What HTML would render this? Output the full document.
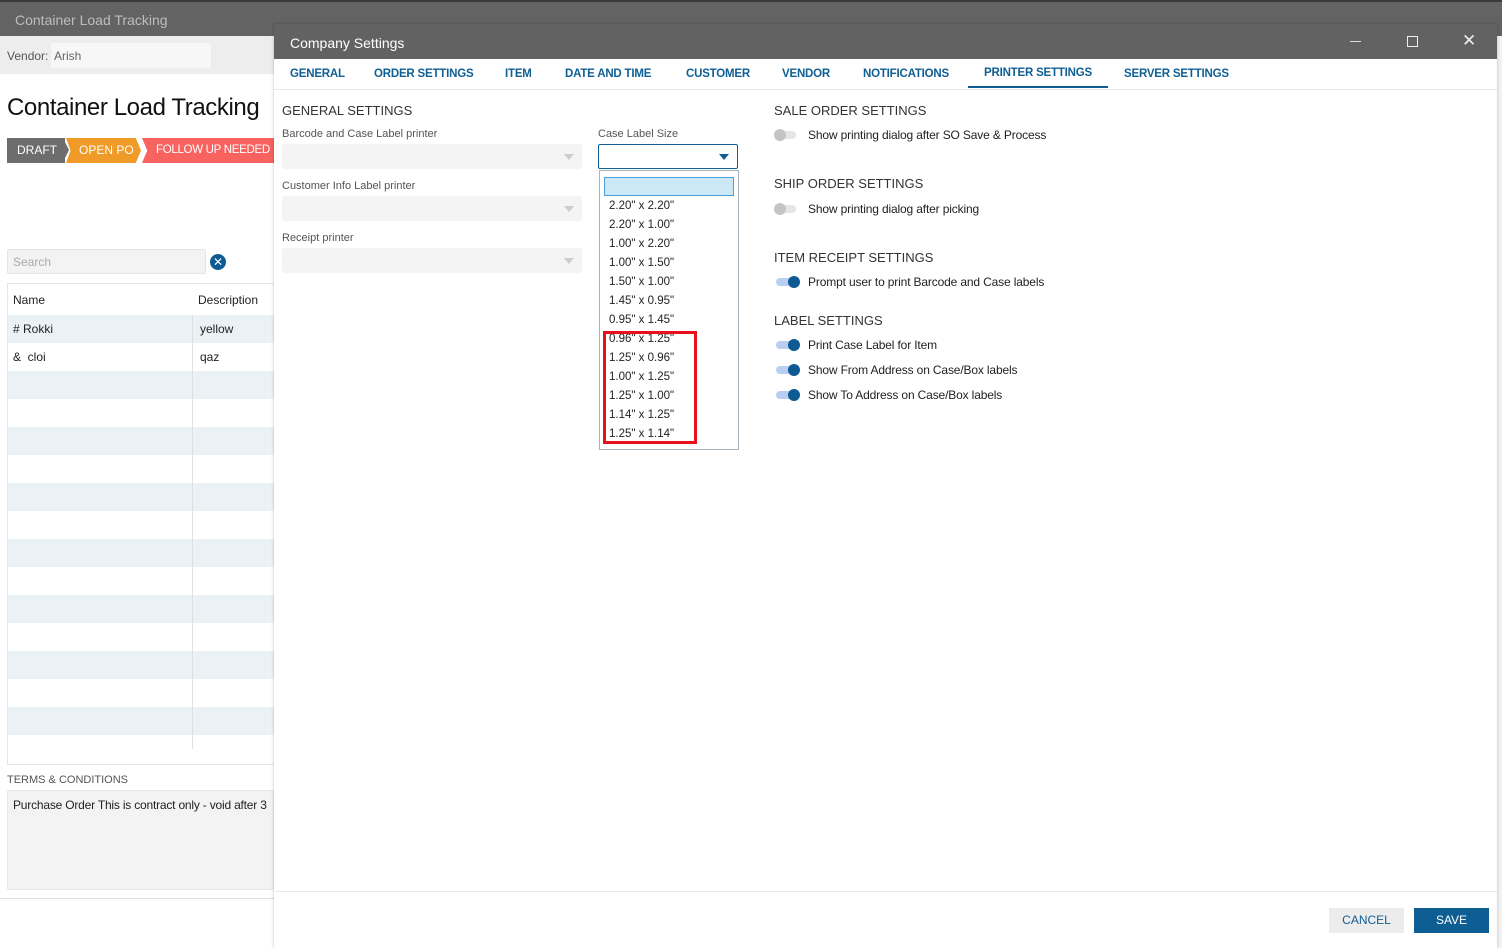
<!DOCTYPE html>
<html><head><meta charset="utf-8"><style>
*{margin:0;padding:0;box-sizing:border-box}
body{width:1502px;height:948px;overflow:hidden;position:relative;background:#fff;font-family:"Liberation Sans","DejaVu Sans",sans-serif;color:#222}
.a{position:absolute;white-space:nowrap}
.tab{position:absolute;top:68px;font-size:11.5px;font-weight:bold;color:#0f5f94;letter-spacing:-0.2px}
.lbl{font-size:11px;color:#555}
.sel{position:absolute;background:#f4f4f4;border-radius:3px;height:25px}
.sel:after{content:"";position:absolute;right:8px;top:10px;border:5px solid transparent;border-top:6px solid #ccc;border-bottom:0}
.h{font-size:13px;color:#333}
.tg{position:absolute;width:22px;height:8px;border-radius:4px}
.tg i{position:absolute;top:-2px;width:12px;height:12px;border-radius:50%}
.off{background:#e6e6e6}.off i{left:0;background:#c4c4c4}
.on{background:#b9cff2}.on i{right:-2px;background:#0e5a92}
.tt{font-size:12px;color:#222;letter-spacing:-0.15px}
.opt{position:absolute;left:609px;font-size:11.5px;color:#222}
</style></head><body>
<div class="a" style="left:0;top:0;width:1502px;height:36px;background:#636363;border-top:2px solid #3a3a3a"></div>
<div class="a" style="left:15px;top:12px;font-size:14px;color:#bdbdbd">Container Load Tracking</div>
<div class="a" style="left:0;top:36px;width:274px;height:38px;background:#ededed"></div>
<div class="a" style="left:7px;top:49px;font-size:12px;color:#555">Vendor:</div>
<div class="a" style="left:51px;top:43px;width:160px;height:25px;background:#f7f7f7;border-radius:2px"></div>
<div class="a" style="left:54px;top:49px;font-size:12px;color:#666">Arish</div>
<div class="a" style="left:7px;top:94px;font-size:24px;color:#111;letter-spacing:-0.4px">Container Load Tracking</div>
<div class="a" style="left:7px;top:138px;width:58px;height:25px;background:#6d6d6d;color:#fff;font-size:12px;line-height:25px;padding-left:10px">DRAFT</div>
<div class="a" style="left:63px;top:138px;width:0;height:0;border-top:12.5px solid transparent;border-bottom:12.5px solid transparent;border-left:6px solid #6d6d6d"></div>
<div class="a" style="left:66px;top:138px;width:75px;height:25px;background:#f09a28;color:#fff;font-size:12px;line-height:25px;padding-left:13px;clip-path:polygon(0 0,93% 0,100% 50%,93% 100%,0 100%,6% 50%)">OPEN PO</div>
<div class="a" style="left:142px;top:138px;width:132px;height:25px;background:#f8625f;color:#fff;font-size:11.5px;letter-spacing:-0.3px;line-height:25px;padding-left:14px;clip-path:polygon(0 0,100% 0,100% 100%,0 100%,4% 50%)">FOLLOW UP NEEDED</div>
<div class="a" style="left:7px;top:249px;width:199px;height:25px;background:#f3f3f3;border:1px solid #e4e4e4;border-radius:2px"></div>
<div class="a" style="left:13px;top:255px;font-size:12px;color:#aaa">Search</div>
<div class="a" style="left:210px;top:254px;width:16px;height:16px;border-radius:50%;background:#0e5a92;color:#fff;font-size:12px;line-height:16px;text-align:center">✕</div>
<div class="a" style="left:7px;top:283px;width:267px;height:482px;border:1px solid #e6e6e6;border-right:0"></div>
<div class="a" style="left:13px;top:293px;font-size:12px">Name</div>
<div class="a" style="left:198px;top:293px;font-size:12px">Description</div>
<div class="a" style="left:8px;top:315px;width:266px;height:28px;background:#ebf2f6"></div>
<div class="a" style="left:8px;top:371px;width:266px;height:28px;background:#ebf2f6"></div>
<div class="a" style="left:8px;top:427px;width:266px;height:28px;background:#ebf2f6"></div>
<div class="a" style="left:8px;top:483px;width:266px;height:28px;background:#ebf2f6"></div>
<div class="a" style="left:8px;top:539px;width:266px;height:28px;background:#ebf2f6"></div>
<div class="a" style="left:8px;top:595px;width:266px;height:28px;background:#ebf2f6"></div>
<div class="a" style="left:8px;top:651px;width:266px;height:28px;background:#ebf2f6"></div>
<div class="a" style="left:8px;top:707px;width:266px;height:28px;background:#ebf2f6"></div>
<div class="a" style="left:192px;top:315px;width:1px;height:434px;background:#e0e0e0"></div>
<div class="a" style="left:13px;top:322px;font-size:12px"># Rokki</div>
<div class="a" style="left:200px;top:322px;font-size:12px">yellow</div>
<div class="a" style="left:13px;top:350px;font-size:12px">&amp;&nbsp; cloi</div>
<div class="a" style="left:200px;top:350px;font-size:12px">qaz</div>
<div class="a" style="left:7px;top:774px;font-size:11px;color:#555">TERMS &amp; CONDITIONS</div>
<div class="a" style="left:7px;top:790px;width:267px;height:100px;background:#f3f3f3;border:1px solid #e8e8e8;border-radius:2px"></div>
<div class="a" style="left:13px;top:798px;font-size:12px;letter-spacing:-0.2px">Purchase Order This is contract only - void after 3</div>
<div class="a" style="left:0;top:898px;width:274px;height:1px;background:#ddd"></div>
<div class="a" style="left:1497px;top:36px;width:5px;height:912px;background:#f2f2f2"></div>
<div class="a" style="left:274px;top:24px;width:1223px;height:924px;background:#fff;box-shadow:0 0 3px rgba(0,0,0,.25)"></div>
<div class="a" style="left:274px;top:24px;width:1223px;height:35px;background:#626262"></div>
<div class="a" style="left:290px;top:35px;font-size:14px;color:#fff">Company Settings</div>
<div class="a" style="left:1350px;top:41px;width:11px;height:1px;background:#ddd"></div>
<div class="a" style="left:1407px;top:36px;width:11px;height:11px;border:1px solid #eee"></div>
<div class="a" style="left:1462px;top:31px;font-size:17px;color:#eee">✕</div>
<div class="a" style="left:274px;top:89px;width:1223px;height:1px;background:#e8e8e8"></div>
<div class="tab" style="left:290px">GENERAL</div>
<div class="tab" style="left:374px">ORDER SETTINGS</div>
<div class="tab" style="left:505px">ITEM</div>
<div class="tab" style="left:565px">DATE AND TIME</div>
<div class="tab" style="left:686px">CUSTOMER</div>
<div class="tab" style="left:782px">VENDOR</div>
<div class="tab" style="left:863px">NOTIFICATIONS</div>
<div class="tab" style="left:984px;top:67px">PRINTER SETTINGS</div>
<div class="a" style="left:968px;top:86px;width:140px;height:2px;background:#0f5f94"></div>
<div class="tab" style="left:1124px">SERVER SETTINGS</div>
<div class="a h" style="left:282px;top:103px">GENERAL SETTINGS</div>
<div class="a lbl" style="left:282px;top:128px">Barcode and Case Label printer</div>
<div class="sel" style="left:282px;top:144px;width:300px"></div>
<div class="a lbl" style="left:282px;top:180px">Customer Info Label printer</div>
<div class="sel" style="left:282px;top:196px;width:300px"></div>
<div class="a lbl" style="left:282px;top:232px">Receipt printer</div>
<div class="sel" style="left:282px;top:248px;width:300px"></div>
<div class="a lbl" style="left:598px;top:128px">Case Label Size</div>
<div class="a" style="left:598px;top:144px;width:140px;height:25px;border:1px solid #0f5f94;border-radius:2px"></div>
<div class="a" style="left:719px;top:154px;border:5px solid transparent;border-top:6px solid #0f5f94;border-bottom:0"></div>
<div class="a" style="left:599px;top:170px;width:140px;height:280px;border:1px solid #aab4bd;background:#fff"></div>
<div class="a" style="left:604px;top:177px;width:130px;height:19px;background:#cce8f6;border:1px solid #4a9fd4"></div>
<div class="opt" style="top:200px">2.20" x 2.20"</div>
<div class="opt" style="top:219px">2.20" x 1.00"</div>
<div class="opt" style="top:238px">1.00" x 2.20"</div>
<div class="opt" style="top:257px">1.00" x 1.50"</div>
<div class="opt" style="top:276px">1.50" x 1.00"</div>
<div class="opt" style="top:295px">1.45" x 0.95"</div>
<div class="opt" style="top:314px">0.95" x 1.45"</div>
<div class="opt" style="top:333px">0.96" x 1.25"</div>
<div class="opt" style="top:352px">1.25" x 0.96"</div>
<div class="opt" style="top:371px">1.00" x 1.25"</div>
<div class="opt" style="top:390px">1.25" x 1.00"</div>
<div class="opt" style="top:409px">1.14" x 1.25"</div>
<div class="opt" style="top:428px">1.25" x 1.14"</div>
<div class="a" style="left:603px;top:331px;width:94px;height:113px;border:3px solid #e8101a"></div>
<div class="a h" style="left:774px;top:103px">SALE ORDER SETTINGS</div>
<div class="tg off" style="left:774px;top:131px"><i></i></div>
<div class="a tt" style="left:808px;top:128px">Show printing dialog after SO Save &amp; Process</div>
<div class="a h" style="left:774px;top:176px">SHIP ORDER SETTINGS</div>
<div class="tg off" style="left:774px;top:205px"><i></i></div>
<div class="a tt" style="left:808px;top:202px">Show printing dialog after picking</div>
<div class="a h" style="left:774px;top:250px">ITEM RECEIPT SETTINGS</div>
<div class="tg on" style="left:776px;top:278px"><i></i></div>
<div class="a tt" style="left:808px;top:275px">Prompt user to print Barcode and Case labels</div>
<div class="a h" style="left:774px;top:313px">LABEL SETTINGS</div>
<div class="tg on" style="left:776px;top:341px"><i></i></div>
<div class="a tt" style="left:808px;top:338px">Print Case Label for Item</div>
<div class="tg on" style="left:776px;top:366px"><i></i></div>
<div class="a tt" style="left:808px;top:363px">Show From Address on Case/Box labels</div>
<div class="tg on" style="left:776px;top:391px"><i></i></div>
<div class="a tt" style="left:808px;top:388px">Show To Address on Case/Box labels</div>
<div class="a" style="left:274px;top:891px;width:1223px;height:1px;background:#e8e8e8"></div>
<div class="a" style="left:1329px;top:908px;width:75px;height:25px;background:#ececec;color:#0f5f94;font-size:12px;line-height:25px;text-align:center">CANCEL</div>
<div class="a" style="left:1414px;top:908px;width:75px;height:25px;background:#0e5e94;color:#fff;font-size:12px;line-height:25px;text-align:center">SAVE</div>
</body></html>
